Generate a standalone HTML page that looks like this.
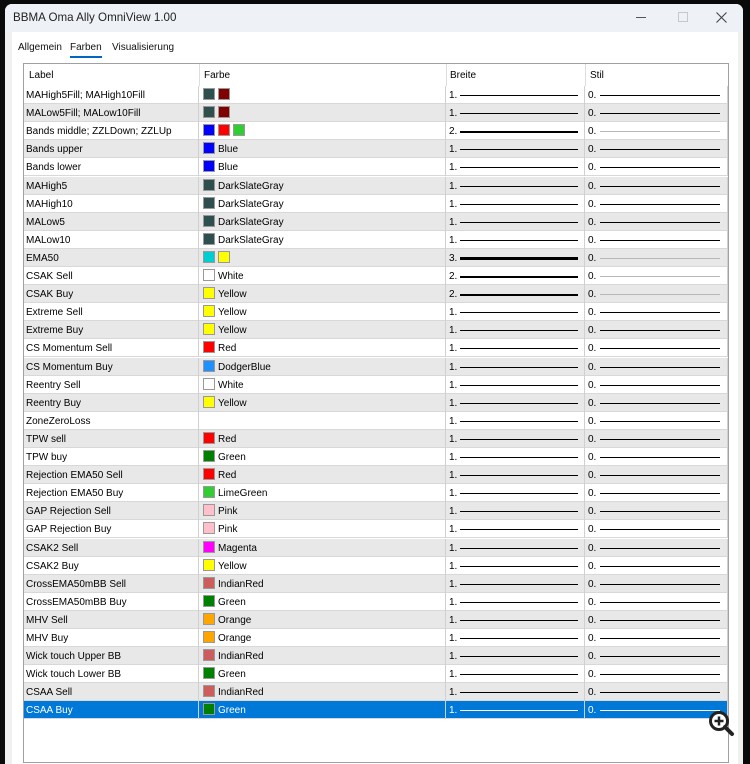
<!DOCTYPE html>
<html><head><meta charset="utf-8"><style>
*{margin:0;padding:0;box-sizing:border-box}
body{width:750px;height:751px;background:#0a0a0a;position:relative;overflow:hidden;font-family:"Liberation Sans",sans-serif;font-size:10px;color:#000}
.win{position:absolute;left:5px;top:4px;width:738px;height:760px;background:#f0f0f0;border-radius:7px 7px 0 0;overflow:hidden}
.title{position:absolute;left:0;top:0;width:738px;height:28px;background:#eef1f6}
.title span{position:absolute;left:8px;top:7px;font-size:11.6px;color:#222}
.body{position:absolute;left:7px;top:28px;width:726px;height:740px;background:#fff}
.tab{position:absolute;top:10px;font-size:10px;color:#111}
.tbl{position:absolute;left:23px;top:63px;width:706px;height:700px;border:1px solid #a0a0a0;background:#fff}
.hdr{position:absolute;left:0;top:0;width:704px;height:22px}
.hdr div{position:absolute;top:6px;font-size:10px}
.vs{position:absolute;top:0;width:1px;height:22px;background:#ddd}
.row{position:absolute;left:0;width:704px;height:18px;border-bottom:1px solid #d8d8d8}
.g{background:#e8e8e8}
.row .c{position:absolute;top:0;height:18px;border-right:1px solid #d0d0d0}
.l{left:0;width:175px;padding:4px 0 0 2px}
.f{left:175px;width:247px;padding:4px 0 0 4px}
.b{left:422px;width:139px;padding:4px 0 0 3px}
.s{left:561px;width:143px;padding:4px 0 0 3px}
.sw{display:inline-block;width:12px;height:12px;border:1px solid #999;vertical-align:top;margin:-2px 3px 0 0}
.ln{position:absolute;height:1px;background:#000;top:9px}
.b .ln{left:14px;width:118px}
.s .ln{left:15px;width:120px}
.s .lg{background:#b8b8b8}
.sel{background:#0078d7;color:#fff}
.sel .ln{background:#fff}
</style></head><body>
<div class="win">
<div class="title"><span>BBMA Oma Ally OmniView 1.00</span>
<div style="position:absolute;left:631px;top:13px;width:10px;height:1px;background:#555"></div>
<div style="position:absolute;left:673px;top:8px;width:10px;height:10px;border:1px solid #c8c8c8"></div>
<svg style="position:absolute;left:711px;top:8px" width="11" height="11" viewBox="0 0 11 11"><path d="M0.5 0.5l10 10M10.5 0.5l-10 10" stroke="#444" stroke-width="1.1"/></svg></div>
<div class="body">
<div class="tab" style="left:6px">Allgemein</div>
<div class="tab" style="left:58px">Farben</div>
<div style="position:absolute;left:58px;top:24px;width:32px;height:2px;background:#0067c0"></div>
<div class="tab" style="left:100px">Visualisierung</div>
</div>
</div>
<div class="tbl">
<div class="hdr"><div style="left:5px">Label</div><div style="left:180px">Farbe</div><div style="left:426px">Breite</div><div style="left:566px">Stil</div>
<span class="vs" style="left:175px"></span><span class="vs" style="left:422px"></span><span class="vs" style="left:561px"></span></div>

<div class="row" style="top:22px"><div class="c l">MAHigh5Fill; MAHigh10Fill</div><div class="c f"><span class="sw" style="background:#2f4f4f"></span><span class="sw" style="background:#800000"></span></div><div class="c b">1.<i class="ln"></i></div><div class="c s">0.<i class="ln"></i></div></div>
<div class="row g" style="top:40.1px"><div class="c l">MALow5Fill; MALow10Fill</div><div class="c f"><span class="sw" style="background:#2f4f4f"></span><span class="sw" style="background:#800000"></span></div><div class="c b">1.<i class="ln"></i></div><div class="c s">0.<i class="ln"></i></div></div>
<div class="row" style="top:58.2px"><div class="c l">Bands middle; ZZLDown; ZZLUp</div><div class="c f"><span class="sw" style="background:#0000ff"></span><span class="sw" style="background:#ff0000"></span><span class="sw" style="background:#32cd32"></span></div><div class="c b">2.<i class="ln" style="height:2px"></i></div><div class="c s">0.<i class="ln lg"></i></div></div>
<div class="row g" style="top:76.3px"><div class="c l">Bands upper</div><div class="c f"><span class="sw" style="background:#0000ff"></span>Blue</div><div class="c b">1.<i class="ln"></i></div><div class="c s">0.<i class="ln"></i></div></div>
<div class="row" style="top:94.4px"><div class="c l">Bands lower</div><div class="c f"><span class="sw" style="background:#0000ff"></span>Blue</div><div class="c b">1.<i class="ln"></i></div><div class="c s">0.<i class="ln"></i></div></div>
<div class="row g" style="top:112.5px"><div class="c l">MAHigh5</div><div class="c f"><span class="sw" style="background:#2f4f4f"></span>DarkSlateGray</div><div class="c b">1.<i class="ln"></i></div><div class="c s">0.<i class="ln"></i></div></div>
<div class="row" style="top:130.6px"><div class="c l">MAHigh10</div><div class="c f"><span class="sw" style="background:#2f4f4f"></span>DarkSlateGray</div><div class="c b">1.<i class="ln"></i></div><div class="c s">0.<i class="ln"></i></div></div>
<div class="row g" style="top:148.7px"><div class="c l">MALow5</div><div class="c f"><span class="sw" style="background:#2f4f4f"></span>DarkSlateGray</div><div class="c b">1.<i class="ln"></i></div><div class="c s">0.<i class="ln"></i></div></div>
<div class="row" style="top:166.8px"><div class="c l">MALow10</div><div class="c f"><span class="sw" style="background:#2f4f4f"></span>DarkSlateGray</div><div class="c b">1.<i class="ln"></i></div><div class="c s">0.<i class="ln"></i></div></div>
<div class="row g" style="top:184.9px"><div class="c l">EMA50</div><div class="c f"><span class="sw" style="background:#00ced1"></span><span class="sw" style="background:#ffff00"></span></div><div class="c b">3.<i class="ln" style="height:3px;top:8px"></i></div><div class="c s">0.<i class="ln lg"></i></div></div>
<div class="row" style="top:203px"><div class="c l">CSAK Sell</div><div class="c f"><span class="sw" style="background:#fff"></span>White</div><div class="c b">2.<i class="ln" style="height:2px"></i></div><div class="c s">0.<i class="ln lg"></i></div></div>
<div class="row g" style="top:221.1px"><div class="c l">CSAK Buy</div><div class="c f"><span class="sw" style="background:#ffff00"></span>Yellow</div><div class="c b">2.<i class="ln" style="height:2px"></i></div><div class="c s">0.<i class="ln lg"></i></div></div>
<div class="row" style="top:239.2px"><div class="c l">Extreme Sell</div><div class="c f"><span class="sw" style="background:#ffff00"></span>Yellow</div><div class="c b">1.<i class="ln"></i></div><div class="c s">0.<i class="ln"></i></div></div>
<div class="row g" style="top:257.3px"><div class="c l">Extreme Buy</div><div class="c f"><span class="sw" style="background:#ffff00"></span>Yellow</div><div class="c b">1.<i class="ln"></i></div><div class="c s">0.<i class="ln"></i></div></div>
<div class="row" style="top:275.4px"><div class="c l">CS Momentum Sell</div><div class="c f"><span class="sw" style="background:#ff0000"></span>Red</div><div class="c b">1.<i class="ln"></i></div><div class="c s">0.<i class="ln"></i></div></div>
<div class="row g" style="top:293.5px"><div class="c l">CS Momentum Buy</div><div class="c f"><span class="sw" style="background:#1e90ff"></span>DodgerBlue</div><div class="c b">1.<i class="ln"></i></div><div class="c s">0.<i class="ln"></i></div></div>
<div class="row" style="top:311.6px"><div class="c l">Reentry Sell</div><div class="c f"><span class="sw" style="background:#fff"></span>White</div><div class="c b">1.<i class="ln"></i></div><div class="c s">0.<i class="ln"></i></div></div>
<div class="row g" style="top:329.7px"><div class="c l">Reentry Buy</div><div class="c f"><span class="sw" style="background:#ffff00"></span>Yellow</div><div class="c b">1.<i class="ln"></i></div><div class="c s">0.<i class="ln"></i></div></div>
<div class="row" style="top:347.8px"><div class="c l">ZoneZeroLoss</div><div class="c f"></div><div class="c b">1.<i class="ln"></i></div><div class="c s">0.<i class="ln"></i></div></div>
<div class="row g" style="top:365.9px"><div class="c l">TPW sell</div><div class="c f"><span class="sw" style="background:#ff0000"></span>Red</div><div class="c b">1.<i class="ln"></i></div><div class="c s">0.<i class="ln"></i></div></div>
<div class="row" style="top:384px"><div class="c l">TPW buy</div><div class="c f"><span class="sw" style="background:#008000"></span>Green</div><div class="c b">1.<i class="ln"></i></div><div class="c s">0.<i class="ln"></i></div></div>
<div class="row g" style="top:402.1px"><div class="c l">Rejection EMA50 Sell</div><div class="c f"><span class="sw" style="background:#ff0000"></span>Red</div><div class="c b">1.<i class="ln"></i></div><div class="c s">0.<i class="ln"></i></div></div>
<div class="row" style="top:420.2px"><div class="c l">Rejection EMA50 Buy</div><div class="c f"><span class="sw" style="background:#32cd32"></span>LimeGreen</div><div class="c b">1.<i class="ln"></i></div><div class="c s">0.<i class="ln"></i></div></div>
<div class="row g" style="top:438.3px"><div class="c l">GAP Rejection Sell</div><div class="c f"><span class="sw" style="background:#ffc0cb"></span>Pink</div><div class="c b">1.<i class="ln"></i></div><div class="c s">0.<i class="ln"></i></div></div>
<div class="row" style="top:456.4px"><div class="c l">GAP Rejection Buy</div><div class="c f"><span class="sw" style="background:#ffc0cb"></span>Pink</div><div class="c b">1.<i class="ln"></i></div><div class="c s">0.<i class="ln"></i></div></div>
<div class="row g" style="top:474.5px"><div class="c l">CSAK2 Sell</div><div class="c f"><span class="sw" style="background:#ff00ff"></span>Magenta</div><div class="c b">1.<i class="ln"></i></div><div class="c s">0.<i class="ln"></i></div></div>
<div class="row" style="top:492.6px"><div class="c l">CSAK2 Buy</div><div class="c f"><span class="sw" style="background:#ffff00"></span>Yellow</div><div class="c b">1.<i class="ln"></i></div><div class="c s">0.<i class="ln"></i></div></div>
<div class="row g" style="top:510.7px"><div class="c l">CrossEMA50mBB Sell</div><div class="c f"><span class="sw" style="background:#cd5c5c"></span>IndianRed</div><div class="c b">1.<i class="ln"></i></div><div class="c s">0.<i class="ln"></i></div></div>
<div class="row" style="top:528.8px"><div class="c l">CrossEMA50mBB Buy</div><div class="c f"><span class="sw" style="background:#008000"></span>Green</div><div class="c b">1.<i class="ln"></i></div><div class="c s">0.<i class="ln"></i></div></div>
<div class="row g" style="top:546.9px"><div class="c l">MHV Sell</div><div class="c f"><span class="sw" style="background:#ffa500"></span>Orange</div><div class="c b">1.<i class="ln"></i></div><div class="c s">0.<i class="ln"></i></div></div>
<div class="row" style="top:565px"><div class="c l">MHV Buy</div><div class="c f"><span class="sw" style="background:#ffa500"></span>Orange</div><div class="c b">1.<i class="ln"></i></div><div class="c s">0.<i class="ln"></i></div></div>
<div class="row g" style="top:583.1px"><div class="c l">Wick touch Upper BB</div><div class="c f"><span class="sw" style="background:#cd5c5c"></span>IndianRed</div><div class="c b">1.<i class="ln"></i></div><div class="c s">0.<i class="ln"></i></div></div>
<div class="row" style="top:601.2px"><div class="c l">Wick touch Lower BB</div><div class="c f"><span class="sw" style="background:#008000"></span>Green</div><div class="c b">1.<i class="ln"></i></div><div class="c s">0.<i class="ln"></i></div></div>
<div class="row g" style="top:619.3px"><div class="c l">CSAA Sell</div><div class="c f"><span class="sw" style="background:#cd5c5c"></span>IndianRed</div><div class="c b">1.<i class="ln"></i></div><div class="c s">0.<i class="ln"></i></div></div>
<div class="row sel" style="top:637.4px"><div class="c l">CSAA Buy</div><div class="c f"><span class="sw" style="background:#008000"></span>Green</div><div class="c b">1.<i class="ln"></i></div><div class="c s">0.<i class="ln"></i></div></div>
</div>
<svg style="position:absolute;left:707px;top:709px" width="30" height="30" viewBox="0 0 30 30"><circle cx="12" cy="12" r="8.5" fill="#fff" stroke="#222" stroke-width="3"/><path d="M12 7.5v9M7.5 12h9" stroke="#222" stroke-width="2.5"/><path d="M18 18l7 7" stroke="#222" stroke-width="4" stroke-linecap="round"/></svg>
</body></html>
